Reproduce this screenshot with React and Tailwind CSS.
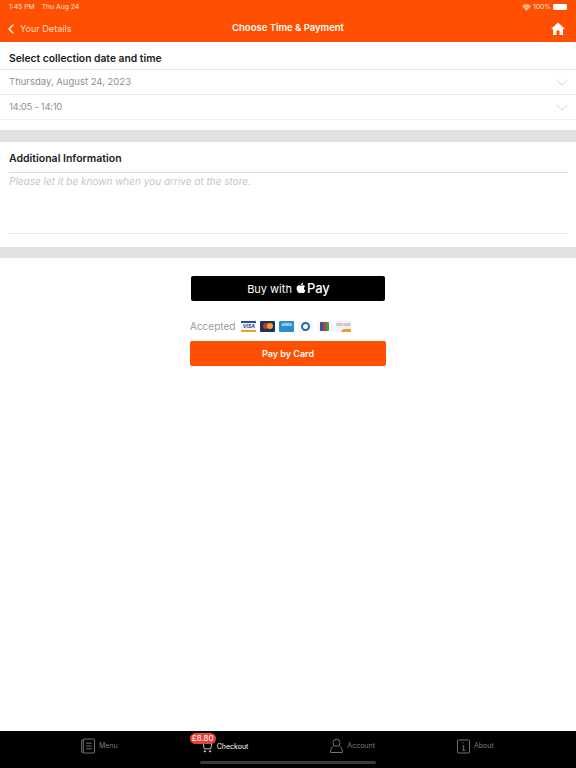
import { ChevronLeft, Wifi } from 'lucide-react'

const font = { fontFamily: 'Inter' }

function Chevron() {
    return (
        <svg width="12" height="7" viewBox="0 0 12 7" fill="none" stroke="#d6d6d6" strokeWidth="1">
            <path d="M0.5 0.8 L6 6 L11.5 0.8" />
        </svg>
    )
}

function CardIcons() {
    return (
        <div className="flex items-center gap-[4px] ml-[6px]">
            <div className="w-[15px] h-[11px] bg-[#f3f4f8] flex flex-col justify-between">
                <div className="h-[2px] bg-[#2a4f9c]" />
                <div className="text-[5px] leading-none font-bold italic text-[#2a4f9c] text-center">VISA</div>
                <div className="h-[2px] bg-[#e3a52c]" />
            </div>
            <div className="w-[15px] h-[11px] rounded-[1px] bg-[#16365f] flex items-center justify-center">
                <div className="w-[6px] h-[6px] rounded-full bg-[#d9302a]" />
                <div className="w-[6px] h-[6px] rounded-full bg-[#f0a030] -ml-[2px]" />
            </div>
            <div className="w-[15px] h-[11px] rounded-[1px] bg-[#2d8ccb] flex items-center justify-center">
                <div className="text-[3.5px] leading-none font-bold text-[#dcedf8]">AMEX</div>
            </div>
            <div className="w-[15px] h-[11px] bg-[#f5f7fa] flex items-center justify-center">
                <div className="w-[9px] h-[9px] rounded-full border-[2px] border-[#2a6a9c]" />
            </div>
            <div className="w-[15px] h-[11px] bg-[#f5f7f5] flex items-center justify-center">
                <div className="w-[3px] h-[9px] rounded-l-[1px] bg-[#25569c]" />
                <div className="w-[3px] h-[9px] bg-[#c93a3a]" />
                <div className="w-[3px] h-[9px] rounded-r-[1px] bg-[#3a9a4a]" />
            </div>
            <div className="w-[15px] h-[11px] bg-[#f1f1f1] flex flex-col items-center justify-center relative overflow-hidden">
                <div className="text-[3.5px] leading-none text-[#777]">DISCOVER</div>
                <div className="absolute -right-[3px] -bottom-[5px] w-[13px] h-[8px] rounded-full bg-[#ee9a3a]" />
            </div>
        </div>
    )
}

function TabItem({ label, active, icon, badge, className }) {
    return (
        <div className={`relative flex items-center gap-[4px] ${className}`}>
            {badge && (
                <span className="absolute left-[-12px] top-[-8px] w-[26px] h-[11px] rounded-full bg-[#e8413a] text-white text-[8px] leading-[11px] text-center">
                    {badge}
                </span>
            )}
            {icon}
            <span className={`text-[7px] ${active ? 'text-white' : 'text-[#7c7c7c]'}`}>{label}</span>
        </div>
    )
}

const MenuIcon = (
    <svg width="14" height="16" viewBox="0 0 15 16" fill="none" stroke="#7c7c7c" strokeWidth="1">
        <rect x="2.5" y="0.5" width="12" height="15" rx="1" />
        <path d="M2.5 1 L0.8 2 V14.5 L2.5 15.5 M5.5 5 H11.5 M5.5 8 H11.5 M5.5 11 H11.5" />
    </svg>
)
const CartIcon = (
    <svg width="11" height="12" viewBox="0 0 12 12" fill="none" stroke="#e5e5e5" strokeWidth="0.9">
        <path d="M0 1 H11.5 M1.2 1 L2.4 8 H9.6 L10.8 1" />
        <circle cx="3.2" cy="10.8" r="0.7" fill="#e5e5e5" />
        <circle cx="8.8" cy="10.8" r="0.7" fill="#e5e5e5" />
    </svg>
)
const AccountIcon = (
    <svg width="13" height="16" viewBox="0 0 14 16" fill="none" stroke="#7c7c7c" strokeWidth="1">
        <circle cx="7" cy="4.5" r="3.8" />
        <path d="M4 7.8 C2 9 0.6 11 0.6 15 H13.4 C13.4 11 12 9 10 7.8" />
    </svg>
)
const AboutIcon = (
    <svg width="13" height="15" viewBox="0 0 14 15" fill="none" stroke="#7c7c7c" strokeWidth="1">
        <rect x="0.5" y="0.5" width="13" height="14" rx="1" />
        <path d="M6 6.5 H7.2 V11.5 M5.5 11.5 H8.8 M6.6 3 V4.2" />
    </svg>
)

export default function App() {
    return (
        <div className="relative h-screen flex flex-col bg-white overflow-hidden" style={font}>
            {/* Header */}
            <header className="h-[42px] shrink-0 bg-[#ff4f00] text-white flex flex-col">
                <div className="h-[14px] px-[9px] flex items-center justify-between text-[6.8px] text-[#ffe3d4]">
                    <div className="flex gap-[7px]">
                        <span>1:45 PM</span>
                        <span>Thu Aug 24</span>
                    </div>
                    <div className="flex items-center gap-[2px]">
                        <Wifi className="w-[9px] h-[9px]" strokeWidth={3} />
                        <span>100%</span>
                        <div className="w-[14px] h-[6px] rounded-[1.5px] bg-white" />
                    </div>
                </div>
                <div className="relative flex-1 flex items-center justify-center pt-[1px]">
                    <div className="absolute left-[3px] flex items-center gap-[1px] text-[#ffd9c4]">
                        <ChevronLeft className="w-[16px] h-[16px] text-[#ffe9dd]" strokeWidth={2.25} />
                        <span className="text-[9.1px]">Your Details</span>
                    </div>
                    <span className="text-[9.5px] font-semibold">Choose Time &amp; Payment</span>
                    <svg className="absolute right-[11px]" width="14" height="13" viewBox="0 0 14 13" fill="white">
                        <path d="M7 0.5 L14 7 H12 V13 H8.5 V8.5 H5.5 V13 H2 V7 H0 Z" />
                    </svg>
                </div>
            </header>

            {/* Collection date */}
            <div className="h-[28px] shrink-0 pl-[9px] pt-[11px] text-[10.3px] leading-[11px] font-semibold text-[#1c1c1c] border-b border-[#e8e8e8]">
                Select collection date and time
            </div>
            <div className="h-[25px] shrink-0 pl-[9px] pr-[8px] flex items-center justify-between text-[9.5px] text-[#8f8f8f] border-b border-[#e8e8e8]">
                <span className="mt-[1px]">Thursday, August 24, 2023</span>
                <Chevron />
            </div>
            <div className="h-[25px] shrink-0 pl-[9px] pr-[8px] flex items-center justify-between text-[9.5px] tracking-[-0.3px] text-[#8f8f8f] border-b border-[#efefef]">
                <span>14:05 - 14:10</span>
                <Chevron />
            </div>
            <div className="h-[12px] shrink-0 mt-[10px] bg-[#e1e1e1]" />

            {/* Additional info */}
            <div className="ml-[9px] mr-[8px] h-[31px] shrink-0 pt-[11px] text-[10.5px] leading-[11px] font-semibold text-[#1c1c1c] border-b border-[#dedede]">
                Additional Information
            </div>
            <div className="ml-[9px] mr-[8px] h-[61px] shrink-0 pt-[1px] text-[10px] italic text-[#c6c6c6] border-b border-[#e6e6e6]">
                Please let it be known when you arrive at the store.
            </div>
            <div className="h-[11px] shrink-0 mt-[13px] bg-[#e1e1e1]" />

            {/* Payment */}
            <div className="flex-1 flex flex-col items-center pt-[18px]">
                <div className="w-[194px] h-[25px] rounded-[2px] bg-black text-white flex items-center justify-center text-[11px]">
                    <span className="ml-[1px] mt-[1px]">Buy with</span>
                    <svg className="ml-[4px] mb-[2px]" width="10" height="12" viewBox="0 0 384 512" fill="white">
                        <path d="M318.7 268.7c-.2-36.7 16.4-64.4 50-84.8-18.8-26.9-47.2-41.7-84.7-44.6-35.5-2.8-74.3 20.7-88.5 20.7-15 0-49.4-19.7-76.4-19.7C63.3 141.2 4 184.8 4 273.5q0 39.3 14.4 81.2c12.8 36.7 59 126.7 107.2 125.2 25.2-.6 43-17.9 75.8-17.9 31.8 0 48.3 17.9 76.4 17.9 48.6-.7 90.4-82.5 102.6-119.3-65.2-30.7-61.7-90-61.7-91.9zm-56.6-164.2c27.3-32.4 24.8-61.9 24-72.5-24.1 1.4-52 16.4-67.9 34.9-17.5 19.8-27.8 44.3-25.6 71.9 26.1 2 49.9-11.4 69.5-34.3z" />
                    </svg>
                    <span className="ml-[1px] text-[13px] font-medium">Pay</span>
                </div>
                <div className="w-[196px] mt-[19px] flex items-center">
                    <span className="text-[10px] leading-[12px] text-[#9a9a9a]">Accepted</span>
                    <CardIcons />
                </div>
                <div className="w-[196px] h-[25px] mt-[9px] rounded-[2px] bg-[#ff4f00] text-white flex items-center justify-center text-[9px] font-semibold">
                    Pay by Card
                </div>
            </div>

            {/* Tab bar */}
            <nav className="h-[37px] shrink-0 bg-black flex items-start pt-[7px]">
                <TabItem label="Menu" icon={MenuIcon} className="ml-[81px]" />
                <TabItem label="Checkout" active icon={CartIcon} badge="£8.80" className="ml-[84px] mt-[3px]" />
                <TabItem label="Account" icon={AccountIcon} className="ml-[82px]" />
                <TabItem label="About" icon={AboutIcon} className="ml-[82px] mt-[1px]" />
            </nav>
            <div className="absolute left-[200px] bottom-[4px] w-[176px] h-[3px] rounded-full bg-[#3a3a3a]" />
        </div>
    )
}
